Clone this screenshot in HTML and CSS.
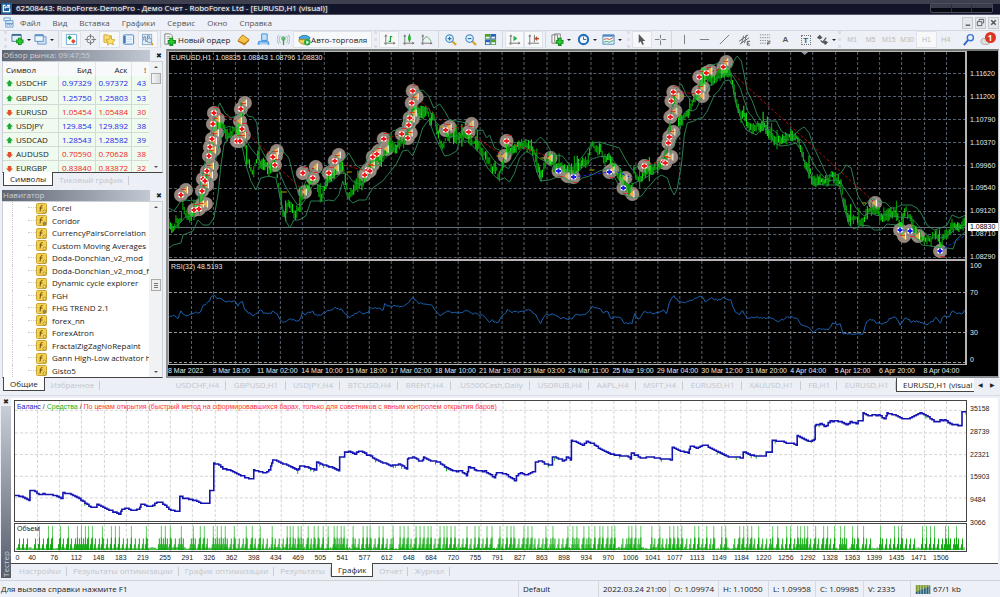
FILE: index.html
```html
<!DOCTYPE html>
<html lang="ru">
<head>
  <meta charset="UTF-8" />
  <meta name="viewport" content="width=device-width, initial-scale=1.0"/>
  <title>62508443: RoboForex-DemoPro - Демо Счет</title>
  <link rel="stylesheet" href="styles.css">
</head>
<body>
  <header class="titlebar">
    <svg class="logo" viewBox="0 0 12 12"><rect width="12" height="12" rx="1" fill="#1f5f9c"/><path d="M5 2.500H2.500V9.500H9.500V6M4.500 6V4.500H9V2.500H6.500" fill="none" stroke="#fff" stroke-width="1.300"/></svg>
    <h1>62508443: RoboForex-DemoPro - Демо Счет - RoboForex Ltd - [EURUSD,H1 (visual)]</h1>
    <div class="win-buttons"><button aria-label="Свернуть"></button><button aria-label="Развернуть"></button><button aria-label="Закрыть"></button></div>
  </header>

  <nav class="menu">
    <svg class="menu-icon" viewBox="0 0 12 12"><path d="M1 1h7v3H1zM3 4h8v3H3zM3 7h8v4H3z" fill="#e8f3fc" stroke="#6b9fd0"/><path d="M4 9l2-1 2 1 2-1" fill="none" stroke="#4a86c0"/></svg>
    <button>Файл</button><button>Вид</button><button>Вставка</button><button>Графики</button><button>Сервис</button><button>Окно</button><button>Справка</button>
    <div class="mdi">
      <button aria-label="Свернуть окно"><svg viewBox="0 0 10 10"><path d="M3 8h5" stroke="#555" stroke-width="1.500"/></svg></button>
      <button aria-label="Восстановить окно"><svg viewBox="0 0 10 10"><path d="M3.500 3V1.500h5v4H7M1.500 4h5v4.500h-5z" fill="none" stroke="#555"/></svg></button>
      <button aria-label="Закрыть окно"><svg viewBox="0 0 10 10"><path d="M2.500 2.500l5 5M7.500 2.500l-5 5" stroke="#555" stroke-width="1.600"/></svg></button>
    </div>
  </nav>

  <div class="toolbar">
    <div class="group grip">
      <button class="drop" aria-label="Новый график"><svg viewBox="0 0 14 14"><path d="M1 2h10v7H1z" fill="#dfeefa" stroke="#4d7896"/><path d="M1 2h10" stroke="#3b6d93" stroke-width="2"/><path d="M9.500 5v8M5.500 9h8" stroke="#11901a" stroke-width="4"/><path d="M9.500 6v6M6.500 9h6" stroke="#2bc935" stroke-width="2"/></svg></button>
      <button class="drop" aria-label="Профили"><svg viewBox="0 0 14 14"><path d="M4 4h9v8H4z" fill="#cfe2f5" stroke="#6f9cc8"/><path d="M1 2h9v7H1z" fill="#edf6fd" stroke="#5b90c2"/><path d="M1 2.500h9" stroke="#5b90c2" stroke-width="2"/></svg></button>
    </div>
    <div class="group">
      <button class="on" aria-label="Обзор рынка"><svg viewBox="0 0 14 14"><path d="M1.500 1.500h11v11h-11z" fill="#fff" stroke="#6aa6dc"/><path d="M5 2.500l2.500 2.500-2.500 2.500-2.500-2.500z" fill="#12a04c"/><path d="M9 6.500l2.500 2.500-2.500 2.500-2.500-2.500z" fill="#e2472c"/></svg></button>
      <button aria-label="Окно данных"><svg viewBox="0 0 14 14"><circle cx="7" cy="7" r="4" fill="none" stroke="#777"/><path d="M7 1v5M7 8v5M1 7h5M8 7h5" stroke="#777"/></svg></button>
      <button class="on" aria-label="Навигатор"><svg viewBox="0 0 14 14"><path d="M1 2h4l1 1h3v7H1z" fill="#f8dc7c" stroke="#d4a429"/><path d="M8 4l1.500 3 3.500.400-2.500 2.200.700 3.200L8 11.200l-3.200 1.600.700-3.200L3 7.400 6.500 7z" fill="#ffe46b" stroke="#cc9a1c" stroke-width=".8"/></svg></button>
      <button aria-label="Терминал"><svg viewBox="0 0 14 14"><rect x="1.500" y="2" width="11" height="10" rx="1" fill="#eff7fd" stroke="#4a86c4"/><path d="M3 3v8" stroke="#3f74b5" stroke-width="2"/><path d="M5 5h6M5 7h6M5 9h5" stroke="#c8daf0"/></svg></button>
      <button class="on" aria-label="Тестер стратегий"><svg viewBox="0 0 14 14"><rect x="1.500" y="1.500" width="10" height="11" fill="#e3eefa" stroke="#8aaccc"/><path d="M3 8V4h2v5h2V3h2v4" fill="none" stroke="#6a8aa8"/><circle cx="9" cy="8" r="2.500" fill="#d5eafa" stroke="#6e97ba"/><path d="M11 10l2 3" stroke="#d89c20" stroke-width="1.600"/></svg></button>
    </div>
    <div class="group mixed">
      <button class="order"><svg viewBox="0 0 14 14"><path d="M2 1h6l2 2v9H2z" fill="#fff" stroke="#777"/><path d="M4 4h4M4 6h4" stroke="#999"/><path d="M9 5v9M5 9.500h9" stroke="#11901a" stroke-width="4"/><path d="M9 6v6M6 9.500h6" stroke="#2bc935" stroke-width="2"/></svg>Новый ордер</button>
      <button aria-label="MetaEditor"><svg viewBox="0 0 14 14"><path d="M1 8l5-6 7 5-5 6z" fill="#f4c347" stroke="#b8801a"/><path d="M1 8l7 3 5-4v1.500L8 13 1 9.500z" fill="#b97812"/></svg></button>
      <button aria-label="Сообщество"><svg viewBox="0 0 14 14"><path d="M5 1h6v7H5z" fill="#bfe0fa" stroke="#3d8fdc"/><path d="M2 9h10l1 3H1z" fill="#8cc3f2" stroke="#3d8fdc"/><path d="M3 12h8" stroke="#fff"/></svg></button>
      <button aria-label="Сигналы"><svg viewBox="0 0 14 14"><path d="M4 3a6 6 0 0 0 0 8M10 3a6 6 0 0 1 0 8M2 2a8 8 0 0 0 0 10M12 2a8 8 0 0 1 0 10" fill="none" stroke="#9eb6c8"/><circle cx="7" cy="6" r="2.500" fill="#68b878"/><path d="M7 7v6" stroke="#4c9a5b" stroke-width="1.500"/></svg></button>
      <button class="auto on"><svg viewBox="0 0 14 14"><path d="M1 5q6-5 12 0l-2 3H3z" fill="#49a8dd" stroke="#2b7ba9"/><path d="M1 7h9v4q-5 3-9-2z" fill="#f1cd54" stroke="#b08a1c"/><circle cx="10" cy="10" r="3.500" fill="#26aa38"/><path d="M9 8l3 2-3 2z" fill="#fff"/></svg>Авто-торговля</button>
    </div>
    <div class="group grip">
      <button class="on" aria-label="Бары"><svg viewBox="0 0 14 14"><path d="M3 2v11M1 11h12M2 4l1-2 1 2M11 10l2 1-2 1" fill="none" stroke="#777"/><path d="M6 9h2V4h2" fill="none" stroke="#29a036" stroke-width="1.300"/></svg></button>
      <button aria-label="Свечи"><svg viewBox="0 0 14 14"><path d="M3 2v11M1 11h12M2 4l1-2 1 2M11 10l2 1-2 1" fill="none" stroke="#777"/><path d="M8 1v9" stroke="#178a25"/><path d="M6.500 3h3v5h-3z" fill="#2cb63a"/></svg></button>
      <button aria-label="Линия"><svg viewBox="0 0 14 14"><path d="M3 2v11M1 11h12M2 4l1-2 1 2M11 10l2 1-2 1" fill="none" stroke="#777"/><path d="M3 8q4-6 6-3l3 4" fill="none" stroke="#63ad6a"/></svg></button>
    </div>
    <div class="group">
      <button aria-label="Приблизить"><svg viewBox="0 0 14 14"><path d="M8 8l5 5" stroke="#d8a52c" stroke-width="2.400"/><circle cx="6" cy="6" r="4" fill="#e6f5ff" stroke="#4a90cc" stroke-width="1.300"/><path d="M6 4v4M4 6h4" stroke="#246eb0" stroke-width="1.300"/></svg></button>
      <button aria-label="Отдалить"><svg viewBox="0 0 14 14"><path d="M8 8l5 5" stroke="#d8a52c" stroke-width="2.400"/><circle cx="6" cy="6" r="4" fill="#e6f5ff" stroke="#4a90cc" stroke-width="1.300"/><path d="M4 6h4" stroke="#246eb0" stroke-width="1.300"/></svg></button>
      <button aria-label="Окна мозаикой"><svg viewBox="0 0 14 14"><path d="M1 1h6v6H1zM7 7h6v6H7z" fill="#4ca526"/><path d="M7 1h6v6H7zM1 7h6v6H1z" fill="#2d63b8"/><path d="M2 4h4v2H2zM8 4h4v2H8zM2 10h4v2H2zM8 10h4v2H8z" fill="#edf5fb"/></svg></button>
    </div>
    <div class="group">
      <button class="on" aria-label="Автопрокрутка"><svg viewBox="0 0 14 14"><path d="M3 2v11M1 11h12M2 4l1-2 1 2M11 10l2 1-2 1" fill="none" stroke="#777"/><path d="M6 3l4 3-4 3z" fill="#2aa83a"/></svg></button>
      <button class="on" aria-label="Сдвиг графика"><svg viewBox="0 0 14 14"><path d="M3 2v11M1 11h12M2 4l1-2 1 2M8 2v8" fill="none" stroke="#777"/><path d="M13 6H9l2-2M9 6l2 2" fill="none" stroke="#b84a28" stroke-width="1.300"/></svg></button>
    </div>
    <div class="group">
      <button class="drop" aria-label="Индикаторы"><svg viewBox="0 0 14 14"><path d="M1 2h6v9H1zM4 1h6v9H4z" fill="#f5f5f5" stroke="#808080"/><path d="M9.500 5v9M5.500 9.500h8" stroke="#11901a" stroke-width="4"/><path d="M9.500 6v6M6.500 9.500h6" stroke="#2bc935" stroke-width="2"/></svg></button>
      <button class="drop" aria-label="Периоды"><svg viewBox="0 0 14 14"><circle cx="7" cy="7" r="5" fill="#eff8ff" stroke="#2470b5" stroke-width="2.200"/><path d="M7 4v3h3" fill="none" stroke="#555"/></svg></button>
      <button class="drop" aria-label="Шаблоны"><svg viewBox="0 0 14 14"><path d="M1 2h12v10H1z" fill="#f2f9ff" stroke="#4a88c4"/><path d="M1 3h12" stroke="#4a88c4" stroke-width="2"/><path d="M2 7l3-1 3 1 4-2" fill="none" stroke="#bb4c3c"/><path d="M2 10l3-1 3 1 4-2" fill="none" stroke="#33a04a"/></svg></button>
    </div>
    <div class="group grip">
      <button class="on" aria-label="Курсор"><svg viewBox="0 0 14 14"><path d="M4 1v10l2-2 2 4 1.500-1L8 8.500h3z" fill="#555"/></svg></button>
      <button aria-label="Перекрестие"><svg viewBox="0 0 14 14"><path d="M7 2v4M7 8v5M1 7h5M8 7h5" stroke="#777"/></svg></button>
    </div>
    <div class="group">
      <button aria-label="Вертикальная линия"><svg viewBox="0 0 14 14"><path d="M7 2v10" stroke="#777"/></svg></button>
      <button aria-label="Горизонтальная линия"><svg viewBox="0 0 14 14"><path d="M2 7h10" stroke="#777"/></svg></button>
      <button aria-label="Трендовая линия"><svg viewBox="0 0 14 14"><path d="M2 12L12 2" stroke="#777"/></svg></button>
      <button aria-label="Канал"><svg viewBox="0 0 14 14"><path d="M1 9l10-7M2 12l10-7M4 11l2-8M7 11l2-9" stroke="#666"/><path d="M13 9h-3v4h3M10 11h2" fill="none" stroke="#555"/></svg></button>
      <button aria-label="Фибоначчи"><svg viewBox="0 0 14 14"><path d="M1 2h11M1 5h11M1 8h11M1 11h7" stroke="#888" stroke-dasharray="1.500 1"/><path d="M12.500 9.500h-3V13M9 11h3" fill="none" stroke="#555"/></svg></button>
      <button class="letter">A</button>
      <button class="letter"><span>T</span></button>
      <button class="drop" aria-label="Стрелки"><svg viewBox="0 0 14 14"><path d="M4 2l3 3-3 2-3-2z" fill="#555"/><path d="M5 8l2 2 4-5" fill="none" stroke="#555" stroke-width="1.300"/><path d="M10 8l3 2-3 3-3-3z" fill="#555"/></svg></button>
    </div>
    <div class="group grip periods">
      <button>M1</button><button>M5</button><button>M15</button><button>M30</button><button class="on">H1</button><button>H4</button>
    </div>
    <div class="group plain">
      <button aria-label="Поиск"><svg viewBox="0 0 14 14"><path d="M2 13l5-6" stroke="#2c62cb" stroke-width="2"/><circle cx="9" cy="5" r="3.300" fill="#e9f2fd" stroke="#3a72d8" stroke-width="1.500"/></svg></button>
      <button class="alert" aria-label="Уведомления"><svg viewBox="0 0 14 14"><ellipse cx="6" cy="9" rx="5" ry="3.500" fill="#ddd" stroke="#aaa"/></svg><b>1</b></button>
    </div>
  </div>

  <main class="workspace">
    <aside class="side">
      <section class="panel market">
        <div class="panel-title">Обзор рынка: 09:47:55<button aria-label="Закрыть">✖</button></div>
        <div class="panel-body">
          <div class="clip">
            <table>
              <thead><tr><th>Символ</th><th>Бид</th><th>Аск</th><th>!</th></tr></thead>
              <tbody id="quotes"></tbody>
            </table>
          </div>
          <div class="scroll"><i class="thumb"></i></div>
        </div>
        <div class="tabs"><button class="active">Символы</button><button>Тиковый график</button></div>
      </section>
      <section class="panel navigator">
        <div class="panel-title">Навигатор<button aria-label="Закрыть">✖</button></div>
        <div class="panel-body">
          <ul class="tree" id="tree"></ul>
          <div class="scroll"><i class="thumb low"></i></div>
        </div>
        <div class="tabs"><button class="active">Общие</button><button>Избранное</button></div>
      </section>
    </aside>

    <section class="charts">
      <div class="chart-window">
        <div class="plot price">
          <svg id="price" viewBox="169 52 797 207" preserveAspectRatio="none"></svg>
          <p class="legend">EURUSD,H1&nbsp; 1.08835 1.08843 1.08796 1.08830</p>
        </div>
        <div class="axis price-axis">
          <span>1.11620</span><span>1.11200</span><span>1.10790</span><span>1.10370</span><span>1.09960</span><span>1.09540</span><span>1.09120</span><span>1.08710</span><span>1.08290</span>
          <b class="last">1.08830</b>
        </div>
        <div class="plot rsi">
          <svg id="rsi" viewBox="169 261 797 103" preserveAspectRatio="none"></svg>
          <p class="legend">RSI(32) 48.5193</p>
        </div>
        <div class="axis rsi-axis"><span>100</span><span>70</span><span>30</span><span>0</span></div>
        <div class="dates" id="dates"></div>
      </div>
      <div class="chart-tabs" id="chartTabs"></div>
    </section>
  </main>

  <section class="tester">
    <div class="tester-side"><button aria-label="Закрыть">✖</button><div>Тестер</div></div>
    <div class="tester-body">
      <div class="tester-plot">
        <svg id="balance" viewBox="14 400 952 122" preserveAspectRatio="none"></svg>
        <p class="legend"><span class="bal">Баланс</span> / <span class="eq">Средства</span> / <span class="model">По ценам открытия (быстрый метод на сформировавшихся барах, только для советников с явным контролем открытия баров)</span></p>
      </div>
      <div class="money"><span>35158</span><span>28739</span><span>22321</span><span>15903</span><span>9484</span><span>3066</span></div>
      <div class="tester-volume">
        <svg id="volume" viewBox="14 523 952 28" preserveAspectRatio="none"></svg>
        <p class="legend">Объем</p>
      </div>
      <div class="trades" id="trades"></div>
      <div class="tabs tester-tabs"><button>Настройки</button><button>Результаты оптимизации</button><button>График оптимизации</button><button>Результаты</button><button class="active">График</button><button>Отчет</button><button>Журнал</button></div>
    </div>
  </section>

  <footer class="status">
    <span>Для вызова справки нажмите F1</span><span>Default</span><span>2022.03.24 21:00</span><span>O: 1.09974</span><span>H: 1.10050</span><span>L: 1.09958</span><span>C: 1.09985</span><span>V: 2335</span>
    <span class="net"><svg viewBox="0 0 16 10"><path d="M0 0h16v10H0z" fill="#7c9a34"/><path d="M0 10V8L16 1v9z" fill="#2a5f80"/><path d="M2.500 0v10M5.500 0v10M8.500 0v10M11.500 0v10M14.500 0v10" stroke="#dfe8d8" stroke-width=".7"/></svg>67/1 kb</span>
  </footer>

  <script src="charts.js"></script>
</body>
</html>
```
FILE: styles.css
```css
* {
  box-sizing: border-box;
}
body {
  margin: 0;
  min-height: 100vh;
  height: 100vh;
  display: flex;
  flex-direction: column;
  font-family: "Open Sans", "Noto Sans", sans-serif;
  font-size: 8px;
  line-height: 12px;
  color: #222;
  background: #ecf0f6;
  overflow: hidden;
}
button {
  font: inherit;
  color: inherit;
  border: 0;
  padding: 0;
  background: none;
}
svg {
  display: block;
}
p, ul, h1 {
  margin: 0;
  padding: 0;
}

/* title + menu */
.titlebar {
  flex: 0 0 15px;
  display: flex;
  align-items: center;
  gap: 4px;
  padding: 1px 7px 0 1px;
  background: linear-gradient(#3f404f 0 4px, #12152a 4px 14px, #55566a 14px);
}
.logo {
  width: 11px;
  height: 11px;
}
.titlebar h1 {
  flex: 1;
  font-size: 8px;
  font-weight: 400;
  color: #fff;
  text-shadow: 0 0 3px #99a;
  white-space: nowrap;
}
.win-buttons {
  display: flex;
  width: 63px;
  height: 10px;
  border: 1px solid #4c4e5c;
  border-radius: 2px;
  background: linear-gradient(#3b3d4a 50%, #080a14 50%);
}
.win-buttons button {
  flex: 1;
}
.win-buttons button + button {
  border-left: 1px solid #2c2e3c;
}
.menu {
  flex: 0 0 15px;
  display: flex;
  align-items: center;
  padding: 0 1px 0 3px;
  color: #555;
  background: #eef1f7;
}
.menu-icon {
  width: 11px;
  height: 11px;
  margin-right: 6px;
}
.menu > button {
  margin-right: 12px;
}
.mdi {
  display: flex;
  gap: 2px;
  margin-left: auto;
}
.mdi button {
  width: 11px;
  height: 12px;
  border: 1px solid #c6c9d0;
  background: #e4e7ec;
}

/* toolbar */
.toolbar {
  flex: 0 0 19px;
  display: grid;
  grid-template-columns: 54fr 102fr 214fr 64fr 64fr 43fr 82fr 44fr 167fr 119fr 41fr;
  padding: 0 2px 1px 4px;
  border-top: 1px solid #d5d8df;
  background: #edf0f6;
}
.group {
  display: flex;
  min-width: 0;
  padding: 0 2px;
  border-left: 1px solid #d3d6dc;
}
.group.grip {
  border-left: 3px dotted #dcdfe5;
}
.group.plain {
  border: 0;
}
.group button {
  flex: 1 1 0;
  min-width: 0;
  display: flex;
  align-items: center;
  justify-content: center;
  white-space: nowrap;
}
.group svg {
  flex: none;
  width: 13px;
  height: 13px;
}
.group .on {
  background: #f7f8fa;
  border: 1px solid #dfe2e8;
}
.group .drop::after {
  content: "";
  margin-left: 3px;
  border: 2px solid transparent;
  border-top-color: #222;
  border-bottom: 0;
}
.toolbar .order {
  flex: 71 1 0;
  justify-content: flex-start;
  gap: 2px;
}
.toolbar .mixed button:not(.order):not(.auto) {
  flex: 20 1 0;
}
.toolbar .auto {
  flex: 77 1 0;
}
.group .letter {
  font-family: "Liberation Sans", sans-serif;
  font-weight: 700;
  color: #555;
}
.letter span {
  width: 10px;
  height: 10px;
  line-height: 9px;
  border: 1px dotted #777;
}
.periods button {
  font-family: "Liberation Sans", sans-serif;
  font-size: 7px;
  color: #bbb;
}
.alert {
  position: relative;
}
.alert b {
  position: absolute;
  left: 7px;
  top: 1px;
  width: 11px;
  height: 11px;
  border-radius: 50%;
  color: #fff;
  background: #dd3522;
  line-height: 11px;
}

/* side panels */
.workspace {
  flex: 346 1 0;
  min-height: 0;
  display: flex;
}
.side {
  flex: 0 0 166px;
  width: 166px;
  min-width: 0;
  display: flex;
  flex-direction: column;
  gap: 3px;
  padding: 1px 3px 3px 2px;
}
.panel {
  min-height: 0;
  min-width: 0;
  display: flex;
  flex-direction: column;
}
.market {
  flex: 137 1 0;
}
.navigator {
  flex: 202 1 0;
}
.panel-title {
  flex: 0 0 11px;
  display: flex;
  justify-content: space-between;
  line-height: 10px;
  padding-left: 1px;
  color: #ccd0d8;
  background: linear-gradient(90deg, #5f6673, #c3c9d3 92%, #edf0f6 92%);
}
.panel-title button {
  width: 9px;
  color: #222;
  font-size: 7px;
}
.panel-body {
  flex: 1;
  min-height: 0;
  display: flex;
  border: 1px solid #ccd0d6;
  border-bottom-color: #444;
  background: #fff;
}
.clip {
  flex: 1;
  min-width: 0;
  overflow: hidden;
}
table {
  width: 100%;
  border-collapse: collapse;
  table-layout: fixed;
  line-height: 9px;
}
th, td {
  height: 14px;
  padding: 0 3px;
  text-align: right;
  font-weight: 400;
}
th {
  background: #f8f9fa;
  border-right: 1px solid #e2e4e8;
}
td {
  border: 1px solid #d4dbd4;
  border-width: 0 1px 1px 0;
  background: #effbef;
}
th:nth-child(1), td:nth-child(1) {
  text-align: left;
}
th:nth-child(1) {
  width: 55px;
}
th:nth-child(2) {
  width: 37px;
}
th:nth-child(4) {
  width: 18px;
}
th:last-child, td:last-child {
  border-right: 0;
}
td svg {
  display: inline-block;
  width: 7px;
  height: 7px;
  margin-right: 3px;
  vertical-align: -1px;
}
.up {
  color: #2424ee;
}
.down {
  color: #f02020;
}
.scroll {
  flex: 0 0 13px;
  display: flex;
  flex-direction: column;
  justify-content: space-between;
  align-items: center;
  padding: 4px 1px;
  background: #f1f2f4;
}
.scroll::before, .scroll::after {
  content: "";
  border: 2px solid transparent;
  border-bottom-color: #555;
  border-top: 0;
}
.scroll::after {
  transform: rotate(180deg);
}
.thumb {
  width: 10px;
  height: 11px;
  margin: 5px 0 auto;
  border: 1px solid #aaa;
  background: linear-gradient(90deg, #f5f5f5, #d5d7da);
}
.thumb.low {
  height: 12px;
  margin: 71px 0 auto;
  background: repeating-linear-gradient(#777 0 1px, #eee 1px 2px) center / 4px 5px no-repeat, #eee;
}
.tabs {
  flex: 0 0 14px;
  display: flex;
  padding-left: 1px;
  color: #c1c5cd;
}
.tabs button {
  padding: 0 6px;
  height: 14px;
  white-space: nowrap;
}
.tabs button:not(.active) {
  background: linear-gradient(#c9ccd2, #c9ccd2) right center / 1px 9px no-repeat;
}
.tabs .active, .chart-tabs .active {
  color: #222;
  background: #fff;
  border: 1px solid #444;
  border-top: 0;
  margin-top: -1px;
}
.tree {
  flex: 1;
  min-width: 0;
  display: grid;
  grid-template-columns: minmax(0, 1fr);
  grid-auto-rows: minmax(0, 1fr);
  overflow: hidden;
  list-style: none;
  padding-left: 9px;
}
.tree li {
  display: flex;
  align-items: center;
  gap: 5px;
  padding-left: 15px;
  border-left: 1px dotted #ccc;
  white-space: nowrap;
}
.tree li::before {
  content: "";
  flex: none;
  width: 8px;
  height: 1px;
  margin-right: -5px;
  border-top: 1px dotted #ccc;
}
.tree svg {
  flex: none;
  width: 11px;
  height: 11px;
}

/* charts */
.charts {
  flex: 1;
  min-width: 0;
  display: flex;
  flex-direction: column;
}
.chart-window {
  flex: 1;
  min-height: 0;
  display: grid;
  grid-template-columns: minmax(0, 1fr) 31px;
  grid-template-rows: minmax(0, 210fr) minmax(0, 104fr) minmax(0, 11fr);
  margin-right: 1px;
  border: 2px solid #8d9297;
  border-top-color: #757a76;
  border-right: 1px solid #c3c7cc;
  background: #000;
  color: #e8e8e8;
}
.plot {
  position: relative;
  min-height: 0;
  border: 0 solid #b8b4b4;
  border-width: 1px 2px 2px 1px;
}
.plot.rsi {
  border-width: 0 2px 1px 1px;
}
.plot svg, .tester-plot svg, .tester-volume svg {
  width: 100%;
  height: 100%;
}
.legend {
  position: absolute;
  left: 2px;
  top: 1px;
  font: 7px/9px "Liberation Sans", sans-serif;
  white-space: nowrap;
}
.axis {
  position: relative;
  display: flex;
  flex-direction: column;
  justify-content: space-between;
  font: 7px/8px "Liberation Sans", sans-serif;
  padding-left: 3px;
}
.price-axis {
  padding-top: 19px;
}
.last {
  position: absolute;
  left: 1px;
  right: 0;
  top: 82%;
  padding-left: 2px;
  font-weight: 400;
  color: #000;
  background: #fff;
}
.rsi-axis {
  display: grid;
  grid-template-rows: 27fr 40fr 27fr 9fr;
  padding-top: 1px;
}
.dates {
  grid-column: 1 / -1;
  display: grid;
  grid-template-columns: repeat(18, minmax(0, 1fr));
  margin-right: 30px;
  font: 7px/11px "Liberation Sans", sans-serif;
  white-space: nowrap;
}
.chart-tabs {
  flex: 0 0 17px;
  display: flex;
  overflow: hidden;
  padding: 0 2px 3px 2px;
  color: #c1c5cd;
}
.chart-tabs button {
  flex: 1 1 auto;
  background: linear-gradient(#c9ccd2, #c9ccd2) right center / 1px 9px no-repeat;
}
.chart-tabs .active {
  flex: 0 0 78px;
  margin-top: 0;
  padding-left: 6px;
  overflow: hidden;
  white-space: nowrap;
  text-align: left;
  border-right: 0;
}
.chart-tabs .arrow {
  flex: 0 0 12px;
  color: #222;
  background: none;
  font-size: 6px;
}

/* tester */
.tester {
  flex: 180 1 0;
  min-height: 0;
  display: flex;
  padding: 2px 2px 2px 1px;
  border-top: 1px solid #d8dbe0;
}
.tester-side {
  flex: 0 0 10px;
  display: flex;
  flex-direction: column;
  font-size: 7px;
}
.tester-side button {
  height: 8px;
  line-height: 8px;
}
.tester-side div {
  flex: 1;
  writing-mode: vertical-rl;
  transform: rotate(180deg);
  line-height: 9px;
  padding-top: 1px;
  font-size: 8px;
  color: #ccd;
  background: linear-gradient(#555b68, #c8ced8);
}
.tester-body {
  flex: 1;
  min-width: 0;
  display: grid;
  grid-template-columns: minmax(0, 1fr) 31px;
  grid-template-rows: minmax(0, 1fr) 29px 11px 15px;
  padding: 2px 0 0 3px;
  background: #fff;
}
.tester-plot, .tester-volume {
  position: relative;
  border: 1px solid #444;
}
.tester-plot {
  margin-bottom: 1px;
}
.money {
  display: flex;
  flex-direction: column;
  justify-content: space-between;
  padding: 5px 0 0 3px;
  margin-bottom: -4px;
  font: 7px/8px "Liberation Sans", sans-serif;
}
.bal {
  color: #2222c0;
}
.eq {
  color: #12b012;
}
.model {
  color: #ff3030;
}
.tester-volume .legend {
  top: 0;
}
.trades {
  grid-column: 1;
  display: grid;
  grid-template-columns: 7px repeat(42, minmax(0, 1fr));
  margin-right: 15px;
  font: 7px/11px "Liberation Sans", sans-serif;
  text-align: center;
}
.tester-tabs {
  grid-column: 1 / -1;
  margin: 0 0 0 -3px;
  padding-left: 2px;
  border-top: 1px solid #444;
  background: #ecf0f6;
}

/* status */
.status {
  flex: 0 0 17px;
  display: grid;
  grid-template-columns: 1fr 80px 71px 49px 50px 47px 48px 47px 90px;
  border-top: 1px solid #cdd1d8;
  background: #edf0f6;
  line-height: 16px;
}
.status span {
  padding-left: 4px;
  border-left: 1px solid #d6d9df;
  white-space: nowrap;
}
.status span:first-child {
  padding-left: 1px;
  border: 0;
}
.net {
  display: flex;
  align-items: center;
  gap: 2px;
}
.net svg {
  width: 16px;
  height: 9px;
}
```
FILE: charts.js
```js
const quotes = [
  ["USDCHF", "0.97329", "0.97372", 43, 1],
  ["GBPUSD", "1.25750", "1.25803", 53, 1],
  ["EURUSD", "1.05454", "1.05484", 30, 0],
  ["USDJPY", "129.854", "129.892", 38, 1],
  ["USDCAD", "1.28543", "1.28582", 39, 1],
  ["AUDUSD", "0.70590", "0.70628", 38, 0],
  ["EURGBP", "0.83840", "0.83872", 32, 0]
];
document.getElementById("quotes").innerHTML = quotes.map(q => {
  const cls = q[4] ? "up" : "down";
  const arrow = q[4] ? "M4 0l4 4H6v3H2V4H0z" : "M4 8L0 4h2V1h4v3h2z";
  const fill = q[4] ? "#25a83a" : "#e0502a";
  return `<tr><td><svg viewBox="0 0 8 8"><path d="${arrow}" fill="${fill}"/></svg>${q[0]}</td><td class="${cls}">${q[1]}</td><td class="${cls}">${q[2]}</td><td class="${cls}">${q[3]}</td></tr>`;
}).join("");

const indicators = ["Corel", "Coridor", "CurrencyPairsCorrelation", "Custom Moving Averages", "Doda-Donchian_v2_mod", "Doda-Donchian_v2_mod_fi", "Dynamic cycle explorer", "FGH", "FHG TREND 2.1", "forex_nn", "ForexAtron", "FractalZigZagNoRepaint", "Gann High-Low activator h", "Gisto5"];
document.getElementById("tree").innerHTML = indicators.map((name, i) => {
  const dot = i === 1 || i === 8 ? "#888" : "#f5e08a";
  return `<li><svg viewBox="0 0 11 11"><rect x=".5" y=".5" width="10" height="10" rx="1" fill="#f5d04e" stroke="#c9a53a"/><path d="M6.500 2.500q-1.500-.5-1.800 1.500L4 8.500M3.500 5h3" fill="none" stroke="#6b5310"/><circle cx="8.500" cy="8.500" r="1.500" fill="${dot}" stroke="#8a6d1a" stroke-width=".6"/></svg>${name}</li>`;
}).join("");

const dates = ["8 Mar 2022", "9 Mar 18:00", "11 Mar 02:00", "14 Mar 10:00", "15 Mar 18:00", "17 Mar 02:00", "18 Mar 10:00", "21 Mar 19:00", "23 Mar 03:00", "24 Mar 11:00", "25 Mar 19:00", "29 Mar 04:00", "30 Mar 12:00", "31 Mar 20:00", "4 Apr 04:00", "5 Apr 12:00", "6 Apr 20:00", "8 Apr 04:00"];
document.getElementById("dates").innerHTML = dates.map(d => `<span>${d}</span>`).join("");

const tabs = ["USDCHF,H4", "GBPUSD,H1", "USDJPY,H4", "BTCUSD,H4", "BRENT,H4", ".US500Cash,Daily", "USDRUB,H4", "AAPL,H4", "MSFT,H4", "EURUSD,H1", "XAUUSD,H1", "FB,H1", "EURUSD,H1"];
document.getElementById("chartTabs").innerHTML = tabs.map(t => `<button>${t}</button>`).join("") +
  '<button class="active">EURUSD,H1 (visual</button><button class="arrow">◀</button><button class="arrow">▶</button>';

const trades = [0, 40, 76, 112, 148, 183, 219, 255, 291, 326, 362, 398, 434, 469, 505, 541, 577, 612, 648, 684, 720, 755, 791, 827, 863, 898, 934, 970, 1006, 1041, 1077, 1113, 1149, 1184, 1220, 1256, 1292, 1328, 1363, 1399, 1435, 1471, 1506];
document.getElementById("trades").innerHTML = trades.map(t => `<span>${t}</span>`).join("");

// helpers
let seed = 7;
function rnd() {
  seed = (seed * 16807) % 2147483647;
  return seed / 2147483647;
}
function parse(text) {
  return text.trim().split(/\s+/).map(p => p.split(",").map(Number));
}
function at(points, x) {
  for (let i = 1; i < points.length; i++) {
    const [x0, y0] = points[i - 1], [x1, y1] = points[i];
    if (x <= x1) return x1 === x0 ? y1 : y0 + (y1 - y0) * (x - x0) / (x1 - x0);
  }
  return points[points.length - 1][1];
}
function line(points, color, width, extra = "") {
  return `<polyline points="${points.map(p => p.join(",")).join(" ")}" fill="none" stroke="${color}" stroke-width="${width}" ${extra}/>`;
}
function grid(x0, step, x1, top, bottom, ys, color) {
  let d = "";
  for (let x = x0; x < x1; x += step) d += `M${Math.round(x) + 0.5} ${top}V${bottom}`;
  let h = ys.map(y => `M14 ${Math.round(y) + 0.5}H967`).join("");
  return `<path d="${d}${h}" fill="none" stroke="${color}" stroke-dasharray="3 2"/>`;
}

// price chart
const price = parse(`169,225 173,229 176,221 179,226 183,208 186,215 190,218 193,211 198,211 201,201 203,191 206,178 209,165 211,151 213,138 215,125 218,123 221,126 224,126 227,135 231,134 234,128 238,135 240,115 242,105 244,135 247,158 249,165 253,173 255,166 258,156 261,165 266,163 269,171 273,165 274,158 278,178 280,195 283,211 285,215 289,203 292,205 295,215 299,208 303,195 306,191 310,185 313,176 316,180 319,191 322,196 326,185 329,176 334,175 338,168 343,166 346,181 349,198 353,191 358,181 363,185 366,175 371,165 374,163 379,158 383,161 386,151 391,145 396,148 401,143 406,140 409,131 412,115 414,108 418,111 423,113 426,110 431,120 434,116 438,131 441,145 443,148 447,136 452,135 457,138 463,137 468,136 473,143 478,143 483,153 488,158 493,168 497,168 499,178 503,165 507,151 510,150 515,148 520,143 523,145 527,146 532,146 535,155 538,165 542,178 545,165 549,156 553,160 557,168 562,165 567,171 572,170 577,166 582,165 587,163 590,155 592,145 597,148 602,151 605,160 610,155 613,165 617,175 622,175 625,185 628,188 633,191 634,171 638,178 642,181 644,170 648,173 653,168 658,168 663,165 668,151 670,138 672,115 674,98 677,108 679,120 683,120 687,113 690,110 693,103 697,98 700,90 703,81 707,78 712,80 717,78 720,75 725,71 730,73 733,81 736,98 739,110 742,118 745,111 748,123 752,128 758,125 765,126 770,133 774,140 778,141 783,140 788,138 793,135 798,138 802,151 806,163 810,168 813,181 818,180 823,180 828,181 833,175 838,180 842,183 844,198 848,215 853,218 858,218 863,223 867,215 870,210 875,208 878,211 882,218 887,216 892,213 897,211 900,223 903,225 907,210 912,221 917,231 922,238 927,240 932,240 935,235 938,235 942,245 945,235 950,233 953,225 958,228 963,226 967,221`);
const upper = parse(`169,208 174,211 181,201 186,200 193,201 198,200 201,181 206,158 211,135 216,111 220,103 225,113 231,118 238,115 243,108 248,116 253,117 257,123 259,145 266,158 273,151 283,151 289,158 294,178 299,195 303,188 309,175 316,166 323,175 329,165 338,155 343,161 349,153 356,165 363,170 369,155 379,145 386,138 393,131 403,128 409,108 416,91 423,90 429,96 434,108 440,104 445,111 450,120 457,121 467,123 473,126 478,131 483,130 487,138 490,135 495,148 502,151 508,158 513,148 520,143 527,140 535,143 541,137 547,143 553,155 563,156 570,165 573,168 578,163 587,151 593,143 600,142 610,145 620,148 627,161 633,170 640,165 650,165 658,165 665,155 670,125 675,91 682,84 687,95 692,101 697,98 702,78 710,66 720,63 725,66 732,68 735,60 738,56 742,61 745,75 748,91 753,101 758,115 763,122 770,121 777,121 782,131 788,135 795,135 800,130 805,127 810,133 815,148 822,163 828,176 837,175 842,173 847,165 852,168 855,181 859,196 865,206 872,198 878,201 887,203 892,208 897,208 902,205 912,205 918,208 923,215 928,225 935,230 942,228 948,225 953,215 960,218 967,215`);
const lower = parse(`169,248 173,245 181,243 183,235 193,231 198,220 203,225 209,225 214,218 218,195 221,165 224,145 229,136 236,140 242,145 246,165 251,181 256,190 261,178 269,176 276,178 281,201 286,221 290,228 294,220 299,220 306,216 311,201 316,201 324,201 329,200 334,201 339,195 343,181 348,198 353,203 359,200 366,200 373,188 383,181 391,171 396,165 403,151 408,150 413,156 419,141 423,128 429,120 436,138 445,156 450,155 457,151 460,141 468,141 475,148 482,155 488,168 495,176 500,180 505,178 510,182 515,173 520,158 527,151 533,155 537,171 541,181 550,180 560,176 570,181 577,183 583,178 590,176 600,171 610,168 617,181 625,195 633,198 642,196 648,188 657,178 662,175 668,178 672,190 675,195 678,188 682,165 685,135 688,123 695,121 700,118 703,118 708,111 715,95 720,90 725,81 730,80 733,85 737,105 742,120 747,130 757,135 763,128 770,131 775,143 782,146 790,145 797,143 802,151 808,171 815,184 825,185 832,185 840,185 845,208 850,225 855,229 862,225 870,226 875,230 882,230 888,224 898,225 902,230 912,230 917,238 923,245 932,246 942,248 948,248 954,249 957,240 967,231`);
const sells = parse(`181,195 194,210 199,209 202,191 203,179 205,181 207,171 209,156 210,147 212,139 213,124 214,113 237,141 240,141 242,129 241,109 273,157 275,165 303,173 313,178 329,173 335,161 365,175 368,170 370,171 373,157 377,154 384,139 402,134 408,138 409,125 410,118 412,103 413,91 446,130 469,132 507,141 645,166 664,162 666,163 669,143 670,137 671,117 672,101 674,92 699,92 700,77 707,73 724,67`);
const exits = parse(`186,190 206,204 202,204 207,185 211,175 212,166 214,150 215,141 217,133 218,119 245,103 240,121 244,135 277,151 276,156 305,192 316,167 339,155 337,168 379,151 373,165 387,149 411,133 413,119 415,113 417,97 450,127 472,124 505,156 551,158 568,176 613,170 626,178 633,194 672,157 668,156 674,132 676,111 678,96 704,88 703,96 711,71 727,62 876,203 905,236 919,236`);
const buys = parse(`559,171 574,177 610,172 624,188 901,230 911,231 941,251`);

function drawPrice() {
  const ys = [];
  for (let i = 0; i < 9; i++) ys.push(73 + i * 23);
  let out = grid(191, 22.23, 966, 52, 259, ys, "#56616d");
  out += '<path d="M169 227.5H966" stroke="#66707c"/>';
  out += sells.concat(exits, buys).map(p => `<circle cx="${p[0]}" cy="${p[1]}" r="6.7" fill="#94867c" stroke="#a79b93" stroke-width=".5"/>`).join("");

  let bars = "", bright = "";
  for (let x = 169; x < 967; x += 1.39) {
    const y = at(price, x);
    const spike = rnd() > 0.93 ? 8 : 0;
    const d = `M${x.toFixed(1)} ${(y - 1 - rnd() * 6 - spike).toFixed(1)}V${(y + 1 + rnd() * 6 + spike / 2).toFixed(1)}`;
    if (rnd() > 0.6) bright += d; else bars += d;
  }
  out += `<path d="${bars}" stroke="#009a00" stroke-width="1.2"/><path d="${bright}" stroke="#10e010" stroke-width="1.1"/>`;

  const mid = [];
  for (let x = 169; x < 967; x += 4) mid.push([x, ((at(upper, x) + at(lower, x)) / 2).toFixed(1)]);
  out += line(upper, "#2e8b57", 0.9) + line(lower, "#2e8b57", 0.9) + line(mid, "#2e8b57", 0.9);

  out += '<path d="M215 112L241 123M245 131L273 157M276 165L305 192M303 173L316 167M345 165L366 171M386 139L402 134M418 98L446 125M446 130L472 124M472 135L503 155M510 143L550 157M645 166L664 160M678 92L699 94M707 73L725 68M735 75L875 202" stroke="#c01010" stroke-width=".9" stroke-dasharray="3 2"/>';
  out += '<path d="M574 177L610 172M613 170L633 178M941 251L967 235" stroke="#2020e0" stroke-dasharray="3 2"/>';
  out += '<path d="M282 192h5M347 172h5M497 156h5M541 158h4M590 170h5M680 96h4M440 127h4M863 203h4" stroke="#b5a800"/>';
  out += exits.map(([x, y]) => `<path d="M${x - 3} ${y}l4-3.500v7z" fill="#e8b04a"/><path d="M${x + 1.5} ${y - 3.5}v7" stroke="#fff"/>`).join("");
  const cross = (x, y, color) => `<circle cx="${x}" cy="${y}" r="3" fill="#fff"/><path d="M${x - 2.5} ${y}h5M${x} ${y - 2.5}v5" stroke="${color}" stroke-width="2"/>`;
  out += sells.map(([x, y]) => cross(x, y, "#f01818") + `<path d="M${x} ${y - 5.5}h5" stroke="#e02020" stroke-width=".8"/>`).join("");
  out += buys.map(([x, y]) => cross(x, y, "#1818f0") + `<path d="M${x} ${y + 5.5}h5" stroke="#e02020" stroke-width=".8"/>`).join("");
  out += '<path d="M802 52h7l-3.500 3z" fill="#8899a8"/>';
  document.getElementById("price").innerHTML = out;
}

function drawRsi() {
  const rsi = parse(`169,317 174,315 178,318 181,310 183,314 187,316 192,313 200,312 203,306 207,304 211,298 214,294 217,298 222,298 226,302 235,301 238,306 242,300 245,310 249,313 253,315 258,312 260,309 264,313 271,314 273,311 277,314 281,321 285,322 290,318 295,321 300,320 303,311 305,315 309,312 312,311 316,315 320,315 326,312 331,310 335,307 340,309 343,310 347,316 350,317 355,314 359,312 363,313 368,313 371,307 375,309 380,308 383,311 385,304 390,307 396,306 400,307 408,304 413,297 418,303 426,304 433,306 437,312 441,316 446,312 455,312 462,313 467,310 472,313 478,314 483,316 486,318 490,323 492,319 498,324 502,317 508,310 512,312 520,312 530,310 536,315 541,323 545,316 549,314 555,315 560,318 569,319 573,319 577,314 580,315 588,313 592,307 600,308 604,313 608,311 611,318 620,317 625,323 633,323 635,313 639,319 645,312 653,313 660,313 664,310 667,313 670,303 674,295 677,299 680,302 688,302 694,299 701,295 706,302 710,298 718,300 725,298 732,301 736,313 740,315 743,311 748,318 756,317 765,318 772,318 780,321 790,317 798,318 803,326 810,328 813,332 820,329 830,329 834,323 838,325 841,324 844,333 850,334 858,334 864,334 867,322 872,319 878,323 885,324 890,319 897,317 901,325 907,317 912,322 918,321 926,325 933,322 938,317 941,324 944,316 950,317 953,311 956,313 963,314 967,309`);
  const pts = [];
  for (let x = 169; x < 967; x += 1.5) pts.push([x, (at(rsi, x) + rnd() * 2 - 1).toFixed(1)]);
  document.getElementById("rsi").innerHTML = grid(191, 22.23, 966, 261, 364, [], "#56616d") +
    '<path d="M169 292.500H966M169 332.500H966M169 362.500H966" stroke="#9a9a9a" stroke-dasharray="3 2"/>' + line(pts, "#1a62b4", 1);
}

// tester
function drawBalance() {
  const bal = parse(`14,496 20,497 24,499 28,501 29,491 33,491 38,495 42,494 47,495 53,496 58,498 61,500 62,493 71,495 76,498 82,502 88,507 93,509 96,505 100,507 105,510 110,511 115,514 119,515 121,510 126,509 130,511 138,510 140,505 146,507 153,506 155,503 160,503 165,507 170,511 178,512 179,497 183,499 190,500 195,501 201,504 208,504 209,491 212,491 213,463 217,464 222,469 228,470 233,473 240,476 245,478 252,479 253,470 258,472 265,473 269,469 272,460 276,461 281,464 287,465 292,468 297,471 299,466 305,467 315,470 316,462 322,465 330,467 338,471 339,457 343,456 344,452 348,451 355,454 357,450 364,453 372,458 380,462 390,466 398,464 406,469 407,459 412,457 421,462 423,457 430,461 437,462 445,468 455,472 460,471 466,476 468,467 475,470 485,472 494,478 496,473 504,474 510,478 515,482 516,476 520,473 525,475 534,472 535,462 539,461 545,464 551,465 552,457 558,459 563,461 566,457 570,460 571,440 577,443 583,445 585,441 592,443 600,449 608,453 615,455 625,456 630,459 631,453 640,458 650,457 660,459 668,459 671,461 672,447 680,451 688,453 690,446 697,448 703,444 712,449 722,454 728,457 735,457 742,458 743,452 750,455 758,456 764,456 766,452 771,452 772,440 780,441 790,443 796,445 797,435 804,439 808,441 814,439 815,425 821,423 825,426 830,420 840,421 847,425 850,421 856,423 858,420 862,420 863,412 868,415 878,414 885,418 887,412 894,414 903,419 913,416 920,412 928,416 934,421 944,419 950,423 961,426 962,411 966,411`);
  let d = "M14 496", eq = "";
  for (let x = 15; x < 967; x += 1) {
    const y = at(bal, x);
    if (x % 2 === 0 || Math.abs(y - at(bal, x - 1)) > 2) d += `H${x}V${Math.round(y + rnd() * 0.8 - 0.4)}`;
    if (rnd() > 0.975) eq += `M${x} ${y}v3`;
  }
  document.getElementById("balance").innerHTML = grid(36, 22.2, 966, 400, 522, [409, 432, 454, 476, 498], "#d2d2d2") +
    `<path d="${eq}" stroke="#18b018"/><path d="${d}" fill="none" stroke="#1414b0" stroke-width="1.6"/>`;
}

function drawVolume() {
  const tall = [38, 47, 51, 59, 67, 76, 80, 84, 87, 91, 101, 110, 114, 118, 130, 145, 160, 164, 169, 180, 192, 199, 203, 212, 216, 220, 224, 233, 245, 251, 259, 271, 286, 289, 292, 297, 300, 307, 313, 317, 322, 327, 333, 336, 340, 343, 352, 362, 366, 369, 378, 382, 392, 399, 403, 407, 415, 419, 423, 427, 430, 439, 443, 446, 450, 454, 466, 474, 478, 486, 491, 499, 506, 510, 513, 523, 527, 531, 545, 552, 567, 572, 576, 583, 588, 594, 599, 602, 607, 611, 614, 628, 631, 635, 640, 651, 659, 669, 673, 677, 681, 694, 698, 706, 713, 721, 725, 739, 743, 747, 751, 758, 772, 777, 786, 790, 797, 800, 804, 807, 815, 823, 827, 834, 840, 844, 852, 857, 863, 880, 894, 898, 901, 922, 926, 930, 934, 945, 948, 956];
  let low = "", mid = "", high = "";
  for (let x = 16; x < 965; x += 1) {
    low += `M${x} 550v-${(1 + rnd() * 2).toFixed(1)}`;
  }
  for (let x = 18; x < 965; x += 4) {
    if (rnd() > 0.2) mid += `M${x + 0.5} 550v-12M${x - 0.5} 550v-6`;
  }
  tall.forEach(x => {
    high += `M${x + 0.5} 550V525`;
    mid += `M${x + 0.5} 550v-13M${x - 0.5} 550v-6`;
  });
  document.getElementById("volume").innerHTML = grid(36, 22.2, 966, 523, 551, [], "#d2d2d2") +
    `<path d="${high}" stroke="#5fcc5f"/><path d="${low}${mid}" stroke="#10a810"/>`;
}

drawPrice();
drawRsi();
drawBalance();
drawVolume();
```
